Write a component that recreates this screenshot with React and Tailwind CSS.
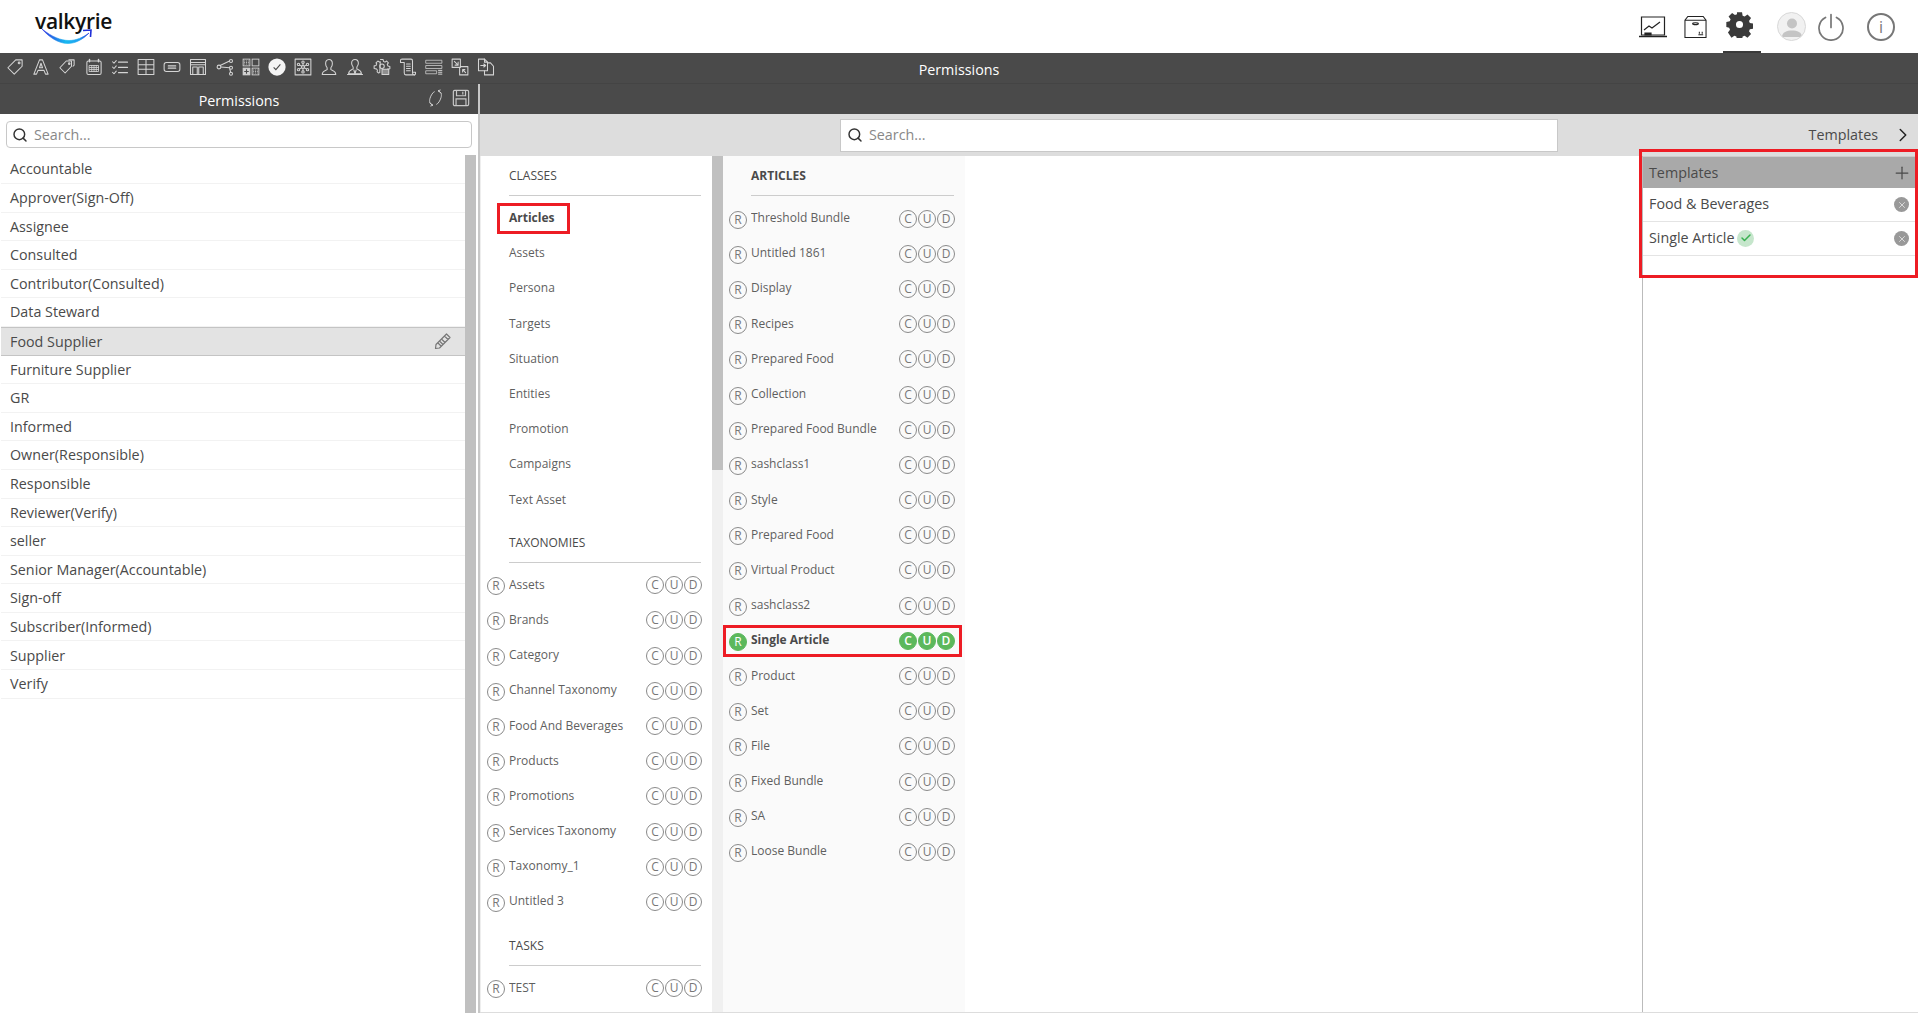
import React from "react";
import { Search, ChevronRight, Plus, X, Check } from "lucide-react";

const roles = ["Accountable","Approver(Sign-Off)","Assignee","Consulted","Contributor(Consulted)","Data Steward","Food Supplier","Furniture Supplier","GR","Informed","Owner(Responsible)","Responsible","Reviewer(Verify)","seller","Senior Manager(Accountable)","Sign-off","Subscriber(Informed)","Supplier","Verify"];
const classes = ["Articles","Assets","Persona","Targets","Situation","Entities","Promotion","Campaigns","Text Asset"];
const taxonomies = ["Assets","Brands","Category","Channel Taxonomy","Food And Beverages","Products","Promotions","Services Taxonomy","Taxonomy_1","Untitled 3"];
const articles = ["Threshold Bundle","Untitled 1861","Display","Recipes","Prepared Food","Collection","Prepared Food Bundle","sashclass1","Style","Prepared Food","Virtual Product","sashclass2","Single Article","Product","Set","File","Fixed Bundle","SA","Loose Bundle"];

const Ic = ({ children }) => (
  <svg viewBox="0 0 24 24" className="w-[18px] h-[18px] shrink-0" fill="none" stroke="#d4d4d4" strokeWidth="1.4" strokeLinejoin="round" strokeLinecap="round">{children}</svg>
);

const toolbarIcons = [
  <Ic><path d="M13 2.500h8.500V11L11 21.500 2.500 13z"/><circle cx="17.500" cy="6.500" r="1.200"/></Ic>,
  <Ic><path d="M10 2.500h4l7.500 19h-3.500l-2-5H8l-2 5H2.500z"/><path d="M10 13h4l-2-6z"/></Ic>,
  <Ic><path d="M11 4h7v7L9.500 20 2.500 13z"/><path d="M14.500 2.500h7v7l-1.500 1.500"/><circle cx="15" cy="7.500" r="1"/></Ic>,
  <Ic><rect x="2.500" y="4" width="19" height="18" rx="2"/><path d="M6 2v3M18 2v3" strokeWidth="2"/><path d="M6 10h12v8H6zM6 12.700h12M6 15.300h12M9 10v8M12 10v8M15 10v8" strokeWidth="1.100"/></Ic>,
  <Ic><path d="M2 5l2 2 3-3.500M2 12l2 2 3-3.500M2 19l2 2 3-3.500"/><path d="M10 5.500h12M10 12.500h12M10 19.500h12"/></Ic>,
  <Ic><path d="M1.500 2h21v20h-21zM12 2v20M1.500 9h21M1.500 15h21"/></Ic>,
  <Ic><rect x="1.500" y="6" width="21" height="12" rx="3"/><path d="M7 10.500h10M7 13.500h10"/></Ic>,
  <Ic><path d="M2 2h20v20H2zM2 6h20M2 9h20"/><path d="M5 12h6v10H5zM13 12h6v10h-6z"/></Ic>,
  <Ic><circle cx="4" cy="12" r="2.500"/><circle cx="20" cy="4" r="2"/><circle cx="20" cy="13" r="2"/><circle cx="20" cy="21" r="2"/><path d="M5.500 10l12.500-6M6.500 12l11.500 1M18.500 15l1 4"/></Ic>,
  <svg viewBox="0 0 24 24" className="w-[18px] h-[18px] shrink-0" stroke="#d4d4d4" strokeWidth="1.200" fill="none">
    <rect x="1.500" y="1.500" width="9" height="9"/><path d="M3 4h6M3 6h6M3 8h6" strokeDasharray="1.200 1.200"/>
    <rect x="13.500" y="1.500" width="9" height="9"/>
    <rect x="1.500" y="13.500" width="9" height="9" fill="#d4d4d4"/><path d="M6 15v6M3 18h6" stroke="#4a4a4a" strokeWidth="1.500"/>
    <rect x="13.500" y="13.500" width="9" height="9"/><path d="M15 16h6M15 18h6M15 20h6" strokeDasharray="1.200 1.200"/>
  </svg>,
  <svg viewBox="0 0 24 24" className="w-[18px] h-[18px] shrink-0"><circle cx="12" cy="12" r="11.500" fill="#f4f4f4"/><path d="M7.500 12.500l3 3 6-7" fill="none" stroke="#4a4a4a" strokeWidth="1.500"/></svg>,
  <Ic><path d="M1.500 1.500h21v21h-21z"/><circle cx="12" cy="12" r="2"/><circle cx="12" cy="5.500" r="1.600"/><circle cx="12" cy="18.500" r="1.600"/><circle cx="6" cy="8.500" r="1.600"/><circle cx="18" cy="8.500" r="1.600"/><circle cx="6" cy="15.500" r="1.600"/><circle cx="18" cy="15.500" r="1.600"/><path d="M12 7v3M12 14v3M7.500 9.500l3 1.500M16.500 9.500l-3 1.500M7.500 14.500l3-1.500M16.500 14.500l-3-1.500"/></Ic>,
  <Ic><path d="M12 2c-3.500 0-4.500 3-4.500 5.500 0 2.500 1.200 4.500 2 5.500v2.500c-2 1.200-6.500 1.500-6.500 6.500h18c0-5-4.500-5.300-6.500-6.500V13c.8-1 2-3 2-5.500C16.500 5 15.500 2 12 2z"/></Ic>,
  <Ic><path d="M12 2c-3 0-4.500 2.500-4.500 5 0 2.500 1.200 4 2 5v2.500c-2 1.200-6 1.500-6 6.500h17c0-5-4-5.300-6-6.500V12c.8-1 2-2.500 2-5 0-2.500-1.500-5-4.500-5z"/><path d="M10.500 16l1.500 5 1.500-5M2 22h20"/></Ic>,
  <Ic><path d="M10 2h3.500l.5 2.500 2 1 2.200-1.500 2.300 2.500-1.500 2 1 2.200 2.500.5v3l-3 .5M9 19.500l-1.500.5-2-1.500.4-2.500-1.500-1.500-2.900-.5v-3.500l2.500-.5 1-2.200L4 6.500l2.500-2.500L8.700 5.500l1-.5z"/><circle cx="12" cy="11" r="3"/><rect x="12" y="15" width="9" height="7" fill="#d4d4d4" fillOpacity=".5"/></Ic>,
  <Ic><path d="M2 3.500C2 2 3 1.500 4 1.500h12c1.500 0 2 1 2 2.500v16c0 1.500 1 2.500 2.500 2.500H9c-1.500 0-2-1-2-2.500V6H2z"/><path d="M18 19h4v1.500c0 1-.7 2-1.500 2M10 8h5M10 11h5M10 14h5M10 17h5"/></Ic>,
  <Ic><path d="M1.500 3h21v4h-21zM1.500 10h21v4h-21zM1.500 17h14v4h-14z" strokeWidth="1"/><path d="M18 16.500h4.500M18 19h4.500M18 21.500h4.500" strokeWidth="1.300"/></Ic>,
  <Ic><path d="M1.500 1.500h11v11h-11zM12.500 11.500h10v11h-11v-10"/><path d="M4.500 4.500l5 5M9.500 5.500v4h-4M19.500 19.500l-4-4M15.500 18.500v-3h3"/></Ic>,
  <Ic><path d="M2 1.500h8l4 4V17H2z"/><path d="M14 6.500h4l4 4.500v11.500H10V17"/><path d="M5 10h6M9 8l2.500 2L9 12M10 1.500v4h4"/></Ic>,
];

const Circle = ({ l, on }) => (
  <span className={`w-[18px] h-[18px] rounded-full border flex items-center justify-center text-[12px] leading-none ${on ? "bg-[#5cb85c] border-[#5cb85c] text-white font-semibold" : "border-[#8a8a8a] text-[#777777]"}`}>{l}</span>
);

const CrudRow = ({ name, on }) => (
  <div className="h-[35.2px] flex items-center pl-[6px] pr-[10px]">
    <span className={`w-[18px] h-[18px] mt-[3px] rounded-full border flex items-center justify-center text-[12px] leading-none shrink-0 ${on ? "bg-[#5cb85c] border-[#5cb85c] text-white" : "border-[#8a8a8a] text-[#777777]"}`}>R</span>
    <span className={`ml-[4px] flex-1 text-[12px] truncate ${on ? "font-bold text-[#4a4a4a]" : "text-[#5f5f5f]"}`}>{name}</span>
    <span className="flex gap-px mt-[1px]">
      <Circle l="C" on={on} /><Circle l="U" on={on} /><Circle l="D" on={on} />
    </span>
  </div>
);

const Heading = ({ children, bold }) => (
  <div className={`ml-[28px] mr-[11px] h-[40px] pt-[10px] border-b border-[#cccccc] text-[12px] leading-[20px] text-[#4a4a4a] ${bold ? "font-bold" : "font-normal"}`}>{children}</div>
);

export default function App() {
  return (
    <div className="w-[1918px] h-[1013px] flex flex-col overflow-hidden bg-white font-['Open_Sans',sans-serif] text-[#4a4a4a]">
      <header className="h-[53px] shrink-0 flex items-center justify-between">
        <div className="relative ml-[35px] w-[80px] h-[53px]">
          <div className="pt-[8px] text-[21px] leading-[26px] font-semibold tracking-[-0.3px] text-[#111111]">valkyrie</div>
          <svg viewBox="0 0 50 15" className="absolute left-[7px] top-[29px] w-[50px] h-[15px]" fill="none">
            <defs><linearGradient id="sw" x1="0" x2="1"><stop offset="0" stopColor="#2b2fe0"/><stop offset=".5" stopColor="#18b8f0"/><stop offset=".8" stopColor="#20a0f0"/><stop offset="1" stopColor="#2030d8"/></linearGradient></defs>
            <path d="M0 0C10 8 19 11.500 27 11.500 34 11.500 41 8.500 47 4 41 10.500 33 14.500 26 14.500 16 14.500 7 8 0 0z" fill="url(#sw)" stroke="url(#sw)" strokeWidth=".6"/>
            <path d="M41 1.500l8-.5-.5 7" stroke="#2030d8" strokeWidth="1.600"/>
          </svg>
        </div>
        <div className="flex items-center h-[53px] pr-[23px]">
          <svg viewBox="0 0 28 24" className="w-[28px] h-[24px]" fill="none" stroke="#222" strokeWidth="1.200"><path d="M2.500 2h23v18h-23z"/><path d="M0 21.500h28" strokeWidth="1.500"/><path d="M5 15l5-4 3 2 8-6" /><path d="M6 18h6v2H6z" fill="#222"/></svg>
          <svg viewBox="0 0 24 24" className="ml-[17px] w-[23px] h-[24px]" fill="none" stroke="#222" strokeWidth="1.100"><path d="M4 1h16l3 4v18H1V5zM1 5h22"/><ellipse cx="12" cy="8.500" rx="3" ry="1"/><path d="M16 19v-2M19 19v-2M15 20h5" /></svg>
          <div className="ml-[16px] w-[38px] h-[53px] flex items-center justify-center border-b-2 border-[#3a3a3a]">
            <svg viewBox="0 0 24 24" className="w-[27px] h-[27px] -mt-[3px] -ml-[6px]" fill="#3a3a3a"><path fillRule="evenodd" d="M9.500 0h5l.6 3.400 2 .8 2.800-2 3.500 3.500-2 2.800.8 2 3.400.6v5l-3.400.6-.8 2 2 2.800-3.500 3.500-2.800-2-2 .8-.6 3.400h-5l-.6-3.400-2-.8-2.800 2L.6 20l2-2.800-.8-2L-1 14.500v-5l3.400-.6.8-2-2-2.800L4.700 .6l2.800 2 2-.8zM12 8.500a3.500 3.500 0 100 7 3.500 3.500 0 000-7z" transform="translate(1.200 1.200) scale(.9)"/></svg>
          </div>
          <div className="ml-[16px] w-[29px] h-[29px] rounded-full border border-[#d8d8d8] bg-[#f1f1f1] overflow-hidden flex justify-center">
            <svg viewBox="0 0 24 24" className="w-[24px] h-[24px] mt-[2px]" fill="#c4c4c4"><circle cx="12" cy="8.500" r="5"/><path d="M2 22c0-5 5-6.500 10-6.500S22 17 22 22z"/></svg>
          </div>
          <svg viewBox="0 0 28 28" className="ml-[11px] w-[28px] h-[28px]" fill="none" stroke="#777" strokeWidth="1.700" strokeLinecap="round"><path d="M8.500 4.500a12 12 0 1 0 11 0M14 1.500v13"/></svg>
          <div className="ml-[22px] w-[28px] h-[28px] rounded-full border-2 border-[#777777] flex items-center justify-center text-[16px] leading-none text-[#777777]">i</div>
        </div>
      </header>

      <div className="h-[31px] shrink-0 bg-[#4a4a4a] border-b border-[#444444] grid grid-cols-[1fr_auto_1fr] items-center">
        <div className="flex items-center pl-[6px] gap-[8.200px] -mt-[2px]">
          {toolbarIcons.map((ic, i) => <React.Fragment key={i}>{ic}</React.Fragment>)}
        </div>
        <div className="text-[14.300px] text-white pt-[3px]">Permissions</div>
        <div />
      </div>

      <div className="flex-1 flex min-h-0">
        <aside className="w-[478px] shrink-0 flex flex-col">
          <div className="h-[30px] shrink-0 bg-[#4a4a4a] relative flex items-center justify-center text-[14.300px] text-white pt-[3px]">
            Permissions
            <span className="absolute right-[8px] top-[5px] flex items-center gap-[8px]">
              <svg viewBox="0 0 20 20" className="w-[17px] h-[18px]" fill="none" stroke="#d4d4d4" strokeWidth="1.100"><path d="M7 18.500C3 17 2.500 14 3.500 10.500 4.500 7 7 3 9 2.500M3 15.500l4 3-3 1M13 1.500C17 3 17.500 6 16.500 9.500 15.500 13 13 17 11 17.500M17 4.500l-4-3 3-1"/></svg>
              <svg viewBox="0 0 20 20" className="w-[18px] h-[18px]" fill="none" stroke="#c8c8c8" strokeWidth="1.300"><path d="M1.500 3A1.500 1.500 0 013 1.500h14A1.500 1.500 0 0118.500 3v14a1.500 1.500 0 01-1.500 1.500H3A1.500 1.500 0 011.500 17z"/><path d="M5 1.500v6h10v-6M12 3v3M4.500 18.500V11h11v7.500"/></svg>
            </span>
          </div>
          <div className="h-[41px] shrink-0 px-[6px] pt-[7px]">
            <div className="h-[27px] rounded border border-[#c8c8c8] bg-white flex items-center pl-[5px]">
              <Search className="w-[16px] h-[16px] text-[#333333]" strokeWidth={2.200} />
              <span className="ml-[6px] text-[14.300px] text-[#888888]">Search...</span>
            </div>
          </div>
          <div className="flex-1 flex min-h-0">
            <div className="w-[465px] pl-px pt-[0.400px]">
              {roles.map((r) => {
                const sel = r === "Food Supplier";
                return (
                  <div key={r} className={`h-[28.600px] pl-[9px] flex items-center justify-between text-[14.300px] border-b ${sel ? "bg-[#e3e3e3] border-[#c4c4c4] border-t" : "border-[#f2f2f2]"}`}>
                    <span>{r}</span>
                    {sel && (
                      <svg viewBox="0 0 18 18" className="w-[18px] h-[18px] mr-[13px]" fill="none" stroke="#777777" strokeWidth="1.200" strokeLinejoin="round"><path d="M2 12.500L12.500 2 16 5.500 5.500 16 1.500 16.500zM10.500 4l3.500 3.500M4 11l3 3M6 9.500l3 3M8 7.500l3 3"/></svg>
                    )}
                  </div>
                );
              })}
            </div>
            <div className="w-[11px] bg-[#c0c0c0]" />
            <div className="w-[2px]" />
          </div>
        </aside>

        <div className="w-[2px] shrink-0 bg-[#c8c8c8]" />

        <main className="flex-1 flex flex-col min-w-0">
          <div className="h-[30px] shrink-0 bg-[#4a4a4a]" />
          <div className="h-[42px] shrink-0 bg-[#dddddd] grid grid-cols-[360px_718px_1fr] items-center">
            <div />
            <div className="h-[33px] bg-white border border-[#c8c8c8] flex items-center pl-[6px]">
              <Search className="w-[16px] h-[16px] text-[#333333]" strokeWidth={2.200} />
              <span className="ml-[6px] text-[14.300px] text-[#888888]">Search...</span>
            </div>
            <div className="flex items-center justify-end gap-[17px] pr-[7px] text-[14.300px]">
              Templates
              <ChevronRight className="w-[22px] h-[22px] text-[#222222] -mx-[3px]" strokeWidth={1.600} />
            </div>
          </div>

          <div className="flex-1 flex min-h-0 border-b border-[#dddddd]">
            <section className="w-[232px] shrink-0 border-l border-[#eeeeee]">
              <Heading>CLASSES</Heading>
              <div className="pt-[4.500px]">
                {classes.map((c, i) => (
                  <div key={c} className={`relative h-[35.2px] pl-[28px] flex items-center text-[12px] ${i === 0 ? "font-bold" : "text-[#5f5f5f]"}`}>
                    {c}
                    {i === 0 && <span className="absolute left-[16px] top-[2px] w-[73px] h-[31px] border-[3px] border-[#ed1c24]" />}
                  </div>
                ))}
              </div>
              <div className="h-[5.500px]" />
              <Heading>TAXONOMIES</Heading>
              <div className="pt-[4.500px]">
                {taxonomies.map((c) => <CrudRow key={c} name={c} />)}
              </div>
              <div className="h-[6.500px]" />
              <Heading>TASKS</Heading>
              <div className="pt-[4.500px]">
                <CrudRow name="TEST" />
              </div>
            </section>

            <div className="w-[11px] shrink-0 bg-[#f0f0f0] flex flex-col">
              <div className="h-[314px] bg-[#c0c0c0]" />
            </div>

            <section className="w-[242px] shrink-0 bg-[#fafafa]">
              <Heading bold>ARTICLES</Heading>
              <div className="pt-[4.500px]">
                {articles.map((a) => (
                  <div key={a} className="relative">
                    <CrudRow name={a} on={a === "Single Article"} />
                    {a === "Single Article" && <span className="absolute left-0 top-[2px] w-[239px] h-[32px] border-[3px] border-[#ed1c24]" />}
                  </div>
                ))}
              </div>
            </section>

            <div className="flex-1" />

            <section className="relative w-[276px] shrink-0 border-l border-[#bbbbbb]">
              <div className="h-[32px] border-t border-[#cccccc] bg-[#a9a9a9] flex items-center justify-between pl-[6px] pr-[6px] text-[14.300px]">
                Templates
                <Plus className="w-[20px] h-[20px] text-[#4a4a4a]" strokeWidth={1.500} />
              </div>
              {[["Food & Beverages", false], ["Single Article", true]].map(([t, ok]) => (
                <div key={t} className="h-[34px] flex items-center justify-between pl-[6px] pr-[9px] text-[14.300px] border-b border-[#e4e4e4]">
                  <span className="flex items-center gap-[3px] -mt-[1px]">
                    {t}
                    {ok && <span className="w-[17px] h-[17px] rounded-full bg-[#c6e6cc] flex items-center justify-center"><Check className="w-[12px] h-[12px] text-[#38b050]" strokeWidth={3} /></span>}
                  </span>
                  <span className="w-[15px] h-[15px] rounded-full bg-[#999999] flex items-center justify-center"><X className="w-[10px] h-[10px] text-white" strokeWidth={1.500} /></span>
                </div>
              ))}
              <span className="absolute -left-[4px] -top-[7px] w-[279px] h-[129px] border-[3px] border-[#ed1c24]" />
            </section>
          </div>
        </main>
      </div>
    </div>
  );
}
